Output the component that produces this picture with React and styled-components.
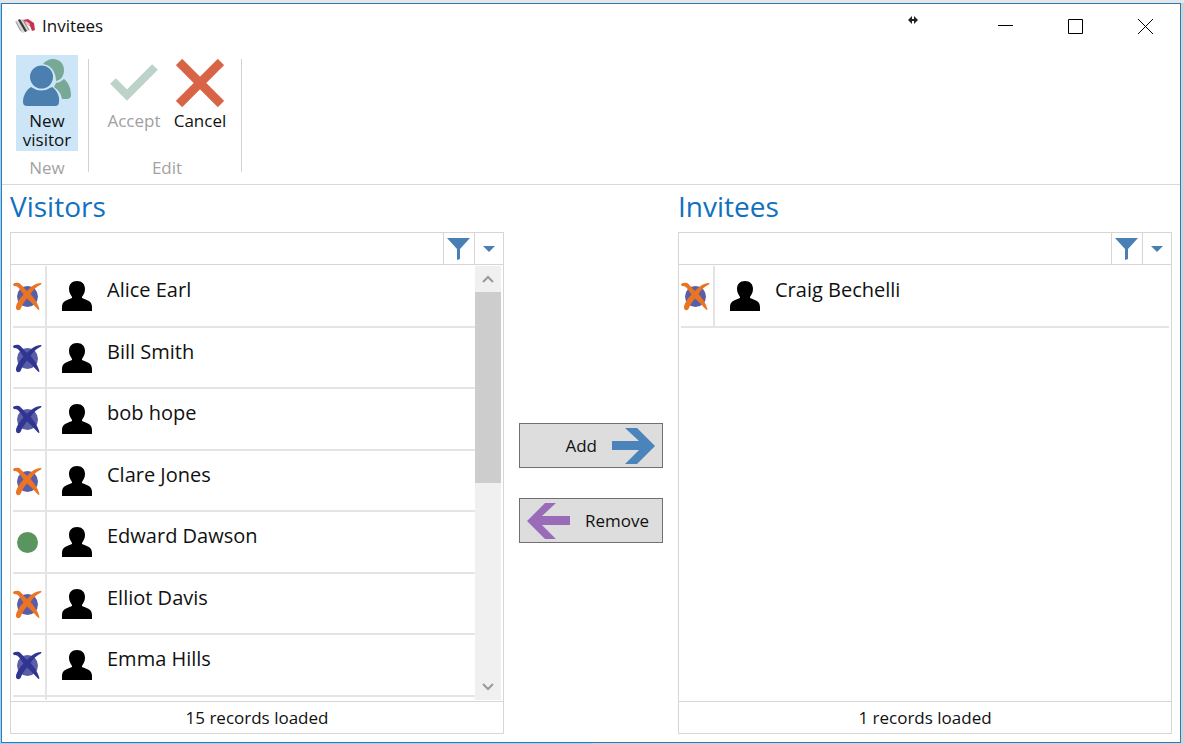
import React from "react";
import styled, { createGlobalStyle } from "styled-components";

const GlobalStyle = createGlobalStyle`
  * { box-sizing: border-box; }
  body {
    margin: 0;
    font-family: "Open Sans", "Noto Sans", sans-serif;
    font-size: 17px;
    line-height: 20px;
    color: #111;
  }
  button, input {
    font: inherit;
    color: inherit;
    border: 0;
    border-radius: 0;
    padding: 0;
    background: transparent;
  }
  svg { display: block; flex: none; }
`;

const Desktop = styled.div`
  height: 100vh;
  min-height: 480px;
  padding: 3px 3px 1px 1px;
  background:
    linear-gradient(#e4e6e8, #e4e6e8) top / 100% 3px no-repeat,
    linear-gradient(to right, #9fd3f3 0 50%, #cfd3d6 50%);
`;

const Window = styled.main`
  height: 100%;
  display: flex;
  flex-direction: column;
  background: #fff;
  border: 1px solid #2b7bb9;
`;

const TitleBar = styled.header`
  display: flex;
  align-items: center;
  height: 44px;
  flex: none;
  padding-left: 13px;
`;

const Title = styled.h1`
  margin: 0 auto 0 6px;
  font-size: 17px;
  font-weight: 400;
  line-height: 20px;
`;

const WindowButton = styled.button`
  display: grid;
  place-items: center;
  width: 70px;
  height: 44px;
`;

const ResizeButton = styled.button`
  display: grid;
  place-items: center;
  align-self: flex-start;
  width: 18px;
  height: 32px;
  margin-right: 48px;
`;

const Ribbon = styled.div`
  display: flex;
  flex: none;
  height: 137px;
  padding-left: 14px;
  border-bottom: 1px solid #d9d9d9;
`;

const RibbonGroup = styled.section`
  display: flex;
  flex-direction: column;
  gap: 7px;
  padding: 7px ${(p) => p.$right}px 0 ${(p) => p.$left}px;
`;

const RibbonButtons = styled.div`
  display: flex;
`;

const RibbonButton = styled.button`
  display: flex;
  flex-direction: column;
  align-items: center;
  gap: 4px;
  width: ${(p) => p.$width}px;
  height: 96px;
  padding-top: 4px;
  line-height: 19px;
  background: ${(p) => (p.$active ? "#cde6f7" : "transparent")};
  &:disabled { color: #a0a0a0; }
`;

const GroupLabel = styled.h2`
  margin: 0;
  font-size: 17px;
  font-weight: 400;
  line-height: 19px;
  text-align: center;
  color: #a3a3a3;
`;

const Separator = styled.div`
  width: 1px;
  margin: 11px 0 12px;
  background: #d2d2d2;
`;

const Content = styled.div`
  flex: 1;
  min-height: 0;
  display: grid;
  grid-template-columns: minmax(0, 1fr) 144px minmax(0, 1fr);
  column-gap: 15px;
  padding: 0 8px 8px;
`;

const Column = styled.section`
  display: flex;
  flex-direction: column;
  min-height: 0;
`;

const Heading = styled.h2`
  margin: 0 0 5px;
  font-size: 28px;
  font-weight: 400;
  line-height: 42px;
  color: #1170c0;
`;

const Panel = styled.div`
  flex: 1;
  min-height: 0;
  display: flex;
  flex-direction: column;
  border: 1px solid #d6d6d6;
`;

const SearchBar = styled.div`
  display: flex;
  flex: none;
  height: 32px;
  border-bottom: 1px solid #d6d6d6;
`;

const SearchInput = styled.input`
  flex: 1;
  min-width: 0;
  padding: 0 8px;
  outline: none;
`;

const SearchButton = styled.button`
  display: grid;
  place-items: center;
  width: ${(p) => p.$width}px;
  border-left: 1px solid #d6d6d6;
`;

const ListArea = styled.div`
  flex: 1;
  min-height: 0;
  display: flex;
  padding: 1px 2px 1px 2px;
`;

const ListView = styled.div`
  flex: 1;
  min-width: 0;
  overflow: hidden;
`;

const PeopleTable = styled.table`
  width: 100%;
  table-layout: fixed;
  border-collapse: separate;
  border-spacing: 0;
  tr { height: 62px; }
  tr:nth-child(even) { height: 61px; }
  td {
    padding: 0;
    border-bottom: 2px solid #e4e4e4;
  }
`;

const StatusCell = styled.td`
  width: 34px;
  && { border-right: 2px solid #e4e4e4; }
`;

const PhotoCell = styled.td`
  width: 60px;
  svg { margin-left: 15px; }
`;

const NameCell = styled.td`
  vertical-align: top;
  font-size: 20px;
  line-height: 24px;
  && { padding-top: 12px; }
`;

const ScrollBar = styled.div`
  display: flex;
  flex-direction: column;
  width: 26px;
  background: #f0f0f0;
`;

const ScrollButton = styled.button`
  display: grid;
  place-items: center;
  height: 26px;
`;

const ScrollTrack = styled.div`
  flex: 1;
`;

const ScrollThumb = styled.div`
  height: 50%;
  background: #cdcdcd;
`;

const Footer = styled.footer`
  flex: none;
  height: 32px;
  border-top: 1px solid #d6d6d6;
  line-height: 32px;
  text-align: center;
`;

const Actions = styled.div`
  display: flex;
  flex-direction: column;
  justify-content: center;
  gap: 30px;
  padding-top: 47px;
`;

const ActionButton = styled.button`
  display: flex;
  align-items: center;
  justify-content: ${(p) => (p.$back ? "flex-start" : "flex-end")};
  gap: 14px;
  height: 45px;
  padding: 0 7px;
  && {
    border: 1px solid #707070;
    background: #ddd;
  }
`;

function AppIcon() {
  return (
    <svg width="21" height="16" viewBox="0 0 21 16" aria-hidden="true">
      <path d="M8 2 13 1 19 5 20 12 17 13 15 8 11 6Z" fill="#c8324c" />
      <path d="M11 3 15 6 14 8 10 5Z" fill="#eec3c9" />
      <path d="M0 3 8 1 15 12 8 15 5 13Z" fill="#d9d7d5" />
      <path d="M3 2 5 1 12 13 10 14Z" fill="#3c3a3a" />
      <path d="M1 4 6 13" stroke="#9a9796" fill="none" />
      <path d="M8 2 14 12" stroke="#8d8a88" fill="none" />
    </svg>
  );
}

function VisitorsIcon() {
  return (
    <svg width="48" height="48" viewBox="0 0 48 48" aria-hidden="true">
      <path d="M30 0C37 0 41 5 41 11 41 17 38 21 33 22 33 13 28 6 20 5 22 2 26 0 30 0Z" fill="#78a896" />
      <path d="M33 24Q38 23 41 20C45 23 48 29 48 36 48 39 46 40 43 40H39C38 34 35 31 31 28Z" fill="#78a896" />
      <circle cx="18.500" cy="18" r="11.500" fill="#4a7fb0" />
      <path d="M8 28Q18 35 29 28C34 31 37 38 36 43Q36 47 32 47H4Q0 47 0 43C0 37 3 31 8 28Z" fill="#4a7fb0" />
    </svg>
  );
}

function AcceptIcon() {
  return (
    <svg width="48" height="48" viewBox="0 0 48 48" aria-hidden="true">
      <path d="M3 22 17 36 45 8" fill="none" stroke="#bcd3ca" strokeWidth="8" />
    </svg>
  );
}

function CancelIcon() {
  return (
    <svg width="48" height="48" viewBox="0 0 48 48" aria-hidden="true">
      <path d="M3 3 45 45M45 3 3 45" fill="none" stroke="#d86345" strokeWidth="9" />
    </svg>
  );
}

function StatusIcon({ status }) {
  if (status === "in") {
    return (
      <svg width="30" height="30" viewBox="0 0 30 30" role="img" aria-label="On site">
        <circle cx="14.500" cy="15.500" r="10.500" fill="#5a9560" />
      </svg>
    );
  }
  const cross = status === "expired" ? "#ea7424" : "#2f3590";
  return (
    <svg width="30" height="30" viewBox="0 0 30 30" role="img" aria-label={status}>
      <circle cx="14.500" cy="15.500" r="10.500" fill="#5a5ea6" />
      <path
        fill={cross}
        d="M0 4C0 2 3 1.500 6 2 8 3 11 7 14 10 18 6 22 2 28 2 29 2 28.500 3.500 27 4 23 6 20 9 17.500 13 21 17 25 22 26.500 28.500 26 29.500 25 28.500 24 27.500 20 23 17 20 14 17.500 11 21 9 24 8 27 7 30 3 30 3 26.500 3 23 7 17 10.500 13.500 8 10 6 6.500 4 5.500 2.500 5 1 5.500 0 4Z"
      />
    </svg>
  );
}

function PersonIcon() {
  return (
    <svg width="30" height="30" viewBox="0 0 30 30" aria-hidden="true">
      <path d="M15 0C20 0 23 3 23 8 23 12 21 14 20 16V17C25 19 30 20 30 26V30H0V26C0 20 5 19 10 17V16C9 14 7 12 7 8 7 3 10 0 15 0Z" fill="#000" />
    </svg>
  );
}

function FilterIcon() {
  return (
    <svg width="24" height="24" viewBox="0 0 24 24" aria-hidden="true">
      <path d="M0 1H23L13 12V22L10 23V12Z" fill="#4a7fb5" />
    </svg>
  );
}

function DropIcon() {
  return (
    <svg width="12" height="6" viewBox="0 0 12 6" aria-hidden="true">
      <path d="M0 0H12L6 6Z" fill="#4a7fb5" />
    </svg>
  );
}

function Chevron({ down }) {
  return (
    <svg width="12" height="8" viewBox="0 0 12 8" aria-hidden="true">
      <path d={down ? "M1 1 6 6 11 1" : "M1 7 6 2 11 7"} fill="none" stroke="#9a9a9a" strokeWidth="2" />
    </svg>
  );
}

function ArrowIcon({ back }) {
  return (
    <svg width="44" height="36" viewBox="0 0 44 36" aria-hidden="true">
      {back ? (
        <path d="M0 18 18 0H29L15 13H43V22H15L29 36H18Z" fill="#9a6bb9" />
      ) : (
        <path d="M44 18 26 0H14L28 13H1V22H28L14 36H26Z" fill="#4b83bb" />
      )}
    </svg>
  );
}

function PeoplePanel({ id, title, people, scrolls, count }) {
  return (
    <Column aria-labelledby={id}>
      <Heading id={id}>{title}</Heading>
      <Panel>
        <SearchBar>
          <SearchInput type="text" aria-label={`Search ${title}`} />
          <SearchButton $width={31} aria-label="Filter"><FilterIcon /></SearchButton>
          <SearchButton $width={29} aria-label="Filter options"><DropIcon /></SearchButton>
        </SearchBar>
        <ListArea>
          <ListView>
            <PeopleTable aria-labelledby={id}>
              <tbody>
                {people.map((person) => (
                  <tr key={person.name}>
                    <StatusCell><StatusIcon status={person.status} /></StatusCell>
                    <PhotoCell><PersonIcon /></PhotoCell>
                    <NameCell>{person.name}</NameCell>
                  </tr>
                ))}
                {scrolls && (
                  <tr aria-hidden="true">
                    <StatusCell />
                    <PhotoCell />
                    <NameCell />
                  </tr>
                )}
              </tbody>
            </PeopleTable>
          </ListView>
          {scrolls && (
            <ScrollBar>
              <ScrollButton aria-label="Scroll up"><Chevron /></ScrollButton>
              <ScrollTrack><ScrollThumb /></ScrollTrack>
              <ScrollButton aria-label="Scroll down"><Chevron down /></ScrollButton>
            </ScrollBar>
          )}
        </ListArea>
        <Footer>{count} records loaded</Footer>
      </Panel>
    </Column>
  );
}

const visitors = [
  { name: "Alice Earl", status: "expired" },
  { name: "Bill Smith", status: "out" },
  { name: "bob hope", status: "out" },
  { name: "Clare Jones", status: "expired" },
  { name: "Edward Dawson", status: "in" },
  { name: "Elliot Davis", status: "expired" },
  { name: "Emma Hills", status: "out" },
];

const invitees = [{ name: "Craig Bechelli", status: "expired" }];

export default function App() {
  return (
    <>
      <GlobalStyle />
      <Desktop>
        <Window>
          <TitleBar>
            <AppIcon />
            <Title>Invitees</Title>
            <ResizeButton aria-label="Resize">
              <svg width="10" height="8" viewBox="0 0 10 8">
                <path d="M0 4 4 0V3H6V0L10 4 6 8V5H4V8Z" fill="#222" />
              </svg>
            </ResizeButton>
            <WindowButton aria-label="Minimize">
              <svg width="15" height="15" viewBox="0 0 15 15">
                <path d="M0 6.500H15" stroke="#000" />
              </svg>
            </WindowButton>
            <WindowButton aria-label="Maximize">
              <svg width="15" height="15" viewBox="0 0 15 15">
                <path d="M.5.5H14.500V14.500H.5Z" fill="none" stroke="#000" />
              </svg>
            </WindowButton>
            <WindowButton aria-label="Close">
              <svg width="15" height="15" viewBox="0 0 15 15">
                <path d="M0 0 15 15M15 0 0 15" stroke="#000" />
              </svg>
            </WindowButton>
          </TitleBar>
          <Ribbon>
            <RibbonGroup $left={0} $right={10}>
              <RibbonButtons>
                <RibbonButton $width={62} $active><VisitorsIcon />New visitor</RibbonButton>
              </RibbonButtons>
              <GroupLabel>New</GroupLabel>
            </RibbonGroup>
            <Separator />
            <RibbonGroup $left={12} $right={8}>
              <RibbonButtons>
                <RibbonButton $width={66} disabled><AcceptIcon />Accept</RibbonButton>
                <RibbonButton $width={66}><CancelIcon />Cancel</RibbonButton>
              </RibbonButtons>
              <GroupLabel>Edit</GroupLabel>
            </RibbonGroup>
            <Separator />
          </Ribbon>
          <Content>
            <PeoplePanel id="visitors" title="Visitors" people={visitors} scrolls count={15} />
            <Actions>
              <ActionButton>Add<ArrowIcon /></ActionButton>
              <ActionButton $back><ArrowIcon back />Remove</ActionButton>
            </Actions>
            <PeoplePanel id="invitees" title="Invitees" people={invitees} count={1} />
          </Content>
        </Window>
      </Desktop>
    </>
  );
}
